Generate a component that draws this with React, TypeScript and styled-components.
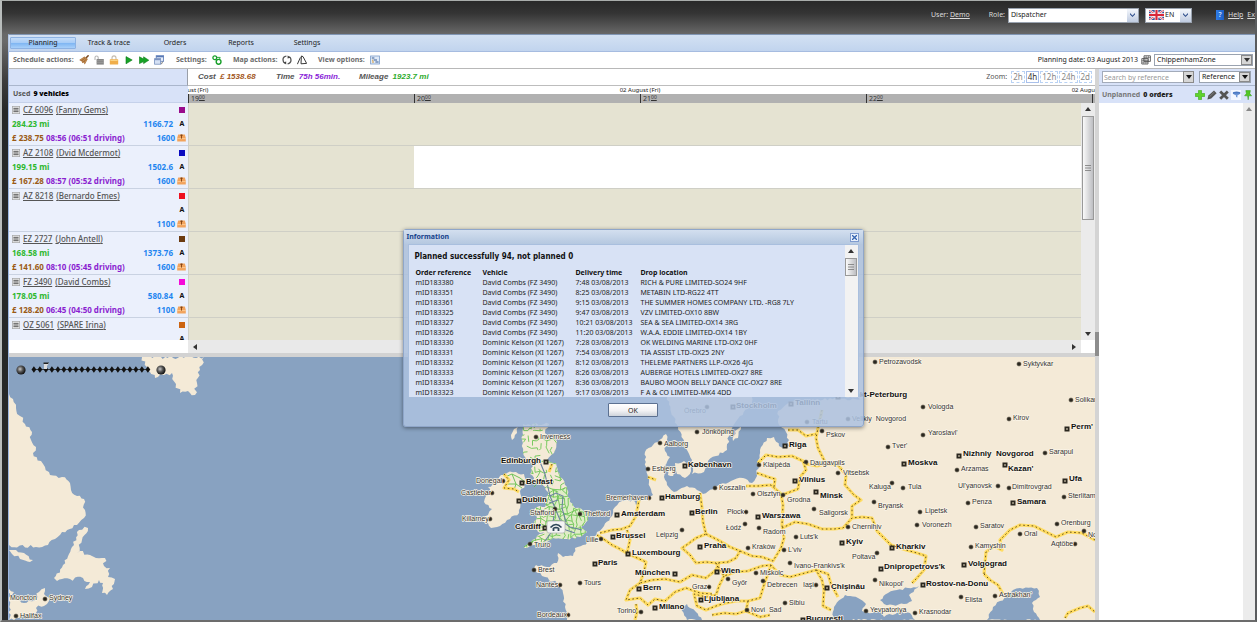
import React from "react";
import styled, { createGlobalStyle } from "styled-components";

const GlobalStyle = createGlobalStyle`
  * { box-sizing: border-box; }
  body { margin: 0; font: 7px/10px "Noto Sans", "DejaVu Sans", sans-serif; color: #222; background: #262828; }
  button, input, select { font: inherit; color: inherit; }
  a { color: inherit; }
`;

/* ---------- shell ---------- */

const Page = styled.div`
  display: flex;
  flex-direction: column;
  min-height: 100vh;
  overflow: hidden;
  position: relative;
  border: solid;
  border-width: 1px 2px 2px 2px;
  border-color: #a9adab #5a5c5e #6c6c6c #b9bdbc;
  background: linear-gradient(#292929 0, #343434 12px, #686868 33px, #6a6a6a 40px, #3c3c3c 80px, #262828 110px);
  padding-left: 6px;
`;

const Header = styled.header`
  display: flex;
  align-items: center;
  justify-content: flex-end;
  height: 33px;
  padding-bottom: 5px;
  color: #dcdcdc;
  white-space: nowrap;
  overflow: hidden;
`;

const UserInfo = styled.span`
  margin-right: 19px;
`;

const RoleField = styled.label`
  display: flex;
  align-items: center;
  gap: 3px;
  margin-right: 6px;
`;

const HelpLinks = styled.nav`
  display: flex;
  align-items: center;
  gap: 4px;
  width: 39px;
  margin-left: 24px;
  overflow: hidden;
`;

const HelpBadge = styled.span`
  width: 8px;
  height: 10px;
  background: linear-gradient(90deg, #2f7de8, #1d5dc4);
  color: #fff;
  text-align: center;
  flex: none;
`;

const SelectBox = styled.span<{ $w: number; $h: number }>`
  position: relative;
  display: inline-flex;
  width: ${(p) => p.$w}px;
  height: ${(p) => p.$h}px;
  background: #fff;
  border: 1px solid #9aa3b0;
  color: #222;
  flex: none;
`;

const NativeSelect = styled.select<{ $pad: number }>`
  appearance: none;
  width: 100%;
  height: 100%;
  padding: 0 12px 0 ${(p) => p.$pad}px;
  border: 0;
  background: transparent;
  outline: none;
`;

const Arrow = styled.span<{ $classic?: boolean }>`
  position: absolute;
  top: 0;
  right: 0;
  bottom: 0;
  width: 11px;
  display: flex;
  align-items: center;
  justify-content: center;
  pointer-events: none;
  background: ${(p) => (p.$classic ? "#d6d6d6" : "linear-gradient(#f4f7fc, #bfcbe0)")};
  border: ${(p) => (p.$classic ? "1px solid #8a8a8a" : "0")};
`;

const FlagSlot = styled.span`
  position: absolute;
  left: 3px;
  top: 1px;
  display: flex;
  pointer-events: none;
`;

const Tabs = styled.nav`
  display: flex;
  height: 18px;
  padding: 2px 1px 2px;
  background: linear-gradient(#d3e1f3, #c1d4ee);
  border-top: 1px solid #8196b4;
  border-bottom: 1px solid #a6bce0;
  border-left: 1px solid #b4c8e8;
`;

const Tab = styled.button<{ $active?: boolean }>`
  width: 66px;
  padding: 0;
  border: ${(p) => (p.$active ? "1px solid #8db2e3" : "1px solid transparent")};
  border-radius: 1px;
  background: ${(p) => (p.$active ? "linear-gradient(#c4dcf8 0%, #a9cdf7 45%, #7db4f2 50%, #a8d0fa 100%)" : "transparent")};
  color: #222;
  line-height: 10px;
`;

const ActionBar = styled.div`
  display: flex;
  align-items: center;
  height: 17px;
  padding: 0 0 0 4px;
  background: #fff;
  border-bottom: 1px solid #b8b8b8;
  border-left: 1px solid #9db8e2;
  white-space: nowrap;
`;

const ActionGroup = styled.div<{ $w: number }>`
  display: flex;
  align-items: center;
  gap: 5px;
  width: ${(p) => p.$w}px;
  flex: none;
`;

const GroupLabel = styled.span`
  font-weight: 700;
  color: #6b6b6b;
`;

const IconButton = styled.button`
  display: flex;
  width: 10px;
  height: 10px;
  padding: 0;
  border: 0;
  background: none;
  flex: none;
`;

const PlanningDate = styled.div`
  display: flex;
  align-items: center;
  gap: 3px;
  margin-left: auto;
  padding-right: 2px;
`;

const Workspace = styled.div`
  display: flex;
  flex: 1;
  min-height: 0;
  border-left: 1px solid #9db8e2;
`;

const MainPane = styled.main`
  display: flex;
  flex-direction: column;
  flex: 1;
  min-width: 0;
  background: #fff;
`;

const ColumnSplitter = styled.div`
  width: 4px;
  background: linear-gradient(#d4d4d4 263px, #8d8d8d 263px, #8d8d8d 287px, #d4d4d4 287px);
`;

/* ---------- schedule ---------- */

const SplitRow = styled.div<{ $h: number }>`
  display: grid;
  grid-template-columns: 179px minmax(0, 1fr);
  height: ${(p) => p.$h}px;
`;

const CornerCell = styled.div`
  background: #d8e2f8;
  border-right: 1px solid #9a9fa8;
  border-bottom: 1px solid #aab6cc;
`;

const Summary = styled.div`
  display: flex;
  align-items: center;
  padding-left: 10px;
  border-bottom: 1px solid #bdbdbd;
  font-family: "Liberation Sans", sans-serif;
  font-size: 8px;
  font-style: italic;
  font-weight: 700;
  color: #555;
  white-space: nowrap;
`;

const Metric = styled.span<{ $color: string; $w: number }>`
  width: ${(p) => p.$w}px;
  b { color: ${(p) => p.$color}; margin-left: 2px; }
`;

const ZoomGroup = styled.div`
  display: flex;
  align-items: center;
  gap: 1px;
  margin-left: auto;
  padding-right: 3px;
  font: 7px/10px "Noto Sans", sans-serif;
`;

const ZoomLabel = styled.span`
  margin-right: 3px;
`;

const ZoomButton = styled.button<{ $on?: boolean }>`
  height: 12px;
  padding: 0 1px;
  border: 1px ${(p) => (p.$on ? "solid #a9c0ea" : "dashed #b9d2f4")};
  background: #fff;
  font-family: "Noto Sans", sans-serif;
  font-size: 8px;
  line-height: 10px;
  color: ${(p) => (p.$on ? "#333" : "#888")};
`;

const FleetTitle = styled.h2`
  display: flex;
  align-items: center;
  gap: 3px;
  margin: 0;
  padding-left: 4px;
  background: #d8e2f8;
  border-bottom: 1px solid #c5d1ea;
  font-size: 7px;
  font-weight: 700;
  color: #555;
  b { color: #000; }
`;

const Axis = styled.div`
  overflow: hidden;
`;

const Days = styled.div`
  display: flex;
  height: 8px;
  margin-left: -226px;
`;

const Day = styled.span`
  flex: none;
  width: 452px;
  font-size: 6px;
  line-height: 8px;
  text-align: center;
`;

const Hours = styled.div`
  display: flex;
  height: 9px;
  background: #b1b1b1;
`;

const Hour = styled.span`
  flex: none;
  width: 226px;
  border-left: 1px solid #333;
  padding-left: 2px;
  line-height: 9px;
  color: #333;
  sup { font-size: 5px; line-height: 5px; vertical-align: 2px; text-decoration: underline; }
`;

const Fleet = styled.div`
  overflow: hidden;
  background: #ebf0fc;
`;

const Vehicle = styled.div`
  display: grid;
  grid-template-columns: minmax(0, 1fr) auto 10px;
  grid-auto-rows: 14px;
  align-items: center;
  height: 43px;
  padding: 0 1px 0 3px;
  border-bottom: 1px solid #c9d2e2;
  white-space: nowrap;
  font-size: 8px;
  font-weight: 700;
`;

const VehicleName = styled.div`
  grid-column: 1 / 3;
  display: flex;
  align-items: center;
  gap: 3px;
  font-weight: 500;
  color: #555;
`;

const Figure = styled.span<{ $color: string; $gap?: number }>`
  color: ${(p) => p.$color};
  text-align: ${(p) => (p.$gap ? "right" : "left")};
  padding-right: ${(p) => p.$gap || 0}px;
`;

const Swatch = styled.i<{ $color: string }>`
  justify-self: center;
  width: 6px;
  height: 6px;
  background: ${(p) => p.$color};
`;

const Mark = styled.span`
  justify-self: center;
  font-size: 7px;
  color: #111;
`;

const LaneArea = styled.div`
  display: grid;
  grid-template-columns: minmax(0, 1fr) 14px;
  overflow: hidden;
`;

const Lanes = styled.div`
  overflow: hidden;
  background: #e5e3d2;
  border-left: 1px solid #d0d0c8;
`;

const Lane = styled.div<{ $free?: boolean }>`
  height: 43px;
  padding-left: 225px;
  border-bottom: 1px solid #cfcfc6;
  &::after {
    content: "";
    display: block;
    height: 42px;
    background: ${(p) => (p.$free ? "#fff" : "transparent")};
  }
`;

const VScroll = styled.div<{ $faint?: boolean }>`
  display: flex;
  flex-direction: column;
  align-items: center;
  background: ${(p) => (p.$faint ? "#ececec" : "#ebebeb")};
  padding: 4px 0;
`;

const VThumb = styled.div<{ $h: number }>`
  display: flex;
  align-items: center;
  justify-content: center;
  width: 12px;
  height: ${(p) => p.$h}px;
  margin: 5px 0 auto;
  border: 1px solid #999;
  background: linear-gradient(90deg, #fafafa, #bdbec2);
`;

const HScroll = styled.div`
  display: flex;
  align-items: center;
  justify-content: space-between;
  margin-right: 14px;
  padding: 0 5px;
  background: #e9e9e9;
`;

const RowSplitter = styled.div`
  height: 4px;
  background: #d2d2d2;
`;

/* ---------- unplanned orders ---------- */

const OrdersPane = styled.aside`
  display: flex;
  flex-direction: column;
  width: 156px;
  background: #fff;
`;

const SearchRow = styled.div`
  display: flex;
  align-items: center;
  gap: 5px;
  height: 17px;
  padding-left: 3px;
  background: #d8e2f8;
  border-bottom: 1px solid #aab6cc;
`;

const SearchBox = styled.div`
  position: relative;
  width: 92px;
  height: 12px;
`;

const SearchInput = styled.input`
  display: block;
  width: 100%;
  height: 100%;
  padding: 0 12px 0 1px;
  border: 1px solid #a3abba;
  background: #fff;
  outline: none;
  &::placeholder { color: #999; opacity: 1; }
`;

const OrdersTitle = styled.h2`
  display: flex;
  align-items: center;
  gap: 2px;
  height: 17px;
  margin: 0;
  padding: 0 2px 0 3px;
  background: #d8e2f8;
  font-size: 7px;
  font-weight: 700;
  color: #777;
  white-space: nowrap;
  b { color: #222; margin: 0 auto 0 1px; }
`;

const OrdersBody = styled.div`
  display: flex;
  flex: 1;
  justify-content: flex-end;
`;

const OrdersScroll = styled(VScroll)`
  width: 12px;
`;

/* ---------- map ---------- */

const MapArea = styled.section`
  position: relative;
  flex: 1;
  min-height: 263px;
  background: #88a2c1;
  overflow: hidden;
`;

const MapSvg = styled.svg`
  position: absolute;
  inset: 0;
  width: 100%;
  height: 100%;
  font-family: "Liberation Sans", Arial, sans-serif;
`;

/* ---------- dialog ---------- */

const Dialog = styled.section`
  position: absolute;
  left: calc(50% - 226px);
  top: 228px;
  width: 461px;
  display: flex;
  flex-direction: column;
  border: 1px solid #8fa6c9;
  border-radius: 3px;
  background: rgba(172, 193, 224, 0.86);
  box-shadow: 0 1px 4px rgba(0, 0, 0, 0.45);
  padding: 0 4px;
`;

const DialogTitle = styled.header`
  display: flex;
  align-items: center;
  justify-content: space-between;
  height: 14px;
  margin: 0 -4px;
  padding: 0 4px 0 3px;
  background: linear-gradient(#d3dfef, #b5c8e0);
  h2 { margin: 0; font-size: 7px; color: #15428b; }
`;

const CloseButton = styled.button`
  display: flex;
  align-items: center;
  justify-content: center;
  width: 9px;
  height: 9px;
  padding: 0;
  border: 1px solid #7f9ccf;
  background: #e8f0fb;
`;

const DialogBody = styled.div`
  display: flex;
  height: 153px;
  overflow: hidden;
  background: #d8e2f5;
  border: 1px solid #a9bfde;
  border-bottom: 0;
`;

const Report = styled.div`
  flex: 1;
  padding: 6px 0 0 6px;
  h3 { margin: 0 0 5px; font: 700 8px/12px "DejaVu Sans Condensed", "Noto Sans", sans-serif; color: #111; }
`;

const OrdersTable = styled.table`
  border-collapse: collapse;
  table-layout: fixed;
  width: 400px;
  white-space: nowrap;
  th, td { padding: 0 0 0 1px; height: 10px; line-height: 10px; text-align: left; }
  th { color: #111; }
`;

const Col = styled.col<{ $w?: number }>`
  width: ${(p) => (p.$w ? `${p.$w}px` : "auto")};
`;

const DialogScroll = styled(VScroll)`
  width: 13px;
  background: #f2f2f2;
`;

const DialogFooter = styled.footer`
  display: flex;
  justify-content: center;
  padding: 6px 0 9px;
`;

const OkButton = styled.button`
  width: 50px;
  height: 14px;
  padding: 0;
  border: 1px solid #5c7191;
  border-radius: 1px;
  background: linear-gradient(#fff, #f2f2f4 55%, #cfd4dc);
  line-height: 11px;
`;

/* ---------- icons ---------- */

const Svg10 = ({ children }: { children: React.ReactNode }) => (
  <svg width="10" height="10" viewBox="0 0 10 10" fill="none">{children}</svg>
);

const Down = ({ c = "#333" }: { c?: string }) => (
  <svg width="6" height="4" viewBox="0 0 6 4"><path d="M0 0H6L3 4Z" fill={c} /></svg>
);
const Up = ({ c = "#333" }: { c?: string }) => (
  <svg width="6" height="4" viewBox="0 0 6 4"><path d="M0 4H6L3 0Z" fill={c} /></svg>
);
const Chevron = () => (
  <svg width="5" height="4" viewBox="0 0 5 4"><path d="M0 0L2.5 2.5L5 0V1.6L2.5 4L0 1.6Z" fill="#2f4f8c" /></svg>
);
const Grip = () => (
  <svg width="6" height="6" viewBox="0 0 6 6"><path d="M0 .5H6M0 3H6M0 5.5H6" stroke="#777" strokeWidth=".8" /></svg>
);

const Broom = () => (
  <Svg10>
    <path d="M9.6 .3L7 3" stroke="#7a4a22" strokeWidth="1.5" />
    <path d="M5.4 1.4L8.8 4L5.8 9.6L4.6 7.6L3.4 8.2L2.8 6.4L.2 5Z" fill="#a9713a" />
    <path d="M1.6 4.8L5.6 2.6M3.4 6.4L7 3.4M5.4 8L8 4.4" stroke="#d8a466" strokeWidth=".6" />
  </Svg10>
);
const Unlock = () => (
  <Svg10>
    <path d="M1 5V2.6Q1 1 2.6 1Q4.2 1 4.2 2.6V4" stroke="#b5b5b5" strokeWidth="1.1" />
    <rect x="2.6" y="4" width="7.2" height="5.6" fill="#868686" />
    <path d="M2.6 5.7H9.8M2.6 7.6H9.8" stroke="#aaa" strokeWidth=".5" />
  </Svg10>
);
const Lock = () => (
  <Svg10>
    <path d="M3 5V3Q3 .9 5 .9Q7 .9 7 3V5" stroke="#c4bcae" strokeWidth="1.1" />
    <rect x=".8" y="4.2" width="8.4" height="5.4" rx=".6" fill="#f0ae4a" />
    <path d="M1.4 5.4H8.6" stroke="#fbd88c" />
  </Svg10>
);
const Play = () => <Svg10><path d="M2 1.6L8.2 5L2 8.8Z" fill="#17a326" stroke="#0b7a18" strokeWidth=".6" /></Svg10>;
const FastForward = () => (
  <Svg10><path d="M.4 1.8L4.6 4V1.8L9.8 5.2L4.6 8.6V6.6L.4 8.6Z" fill="#17a326" stroke="#0b7a18" strokeWidth=".6" /></Svg10>
);
const Windows = () => (
  <Svg10>
    <rect x="2.2" y=".7" width="7.4" height="5.6" fill="#e6eefb" stroke="#5979b5" strokeWidth=".8" />
    <path d="M2.2 1.6H9.6" stroke="#5979b5" strokeWidth="1.4" />
    <rect x=".6" y="3.6" width="6" height="5.6" fill="#d6e1f4" stroke="#7790bd" strokeWidth=".8" />
    <path d="M.8 4.6H6.4" stroke="#7b93c0" strokeWidth="1.2" /><path d="M7.4 9.2L8.6 6.6" stroke="#777" />
  </Svg10>
);
const Gears = () => (
  <Svg10>
    <circle cx="2.8" cy="2.8" r="1.9" stroke="#19a02b" strokeWidth="1.3" />
    <circle cx="6.6" cy="6.8" r="2.4" stroke="#19a02b" strokeWidth="1.4" />
    <path d="M5 2.4H8.2L7.4 4.4" stroke="#19a02b" strokeWidth=".9" />
  </Svg10>
);
const Refresh = () => (
  <Svg10>
    <path d="M4.4 1.2Q1 1.6 1 4.8Q1 7 2.8 8.2M5.6 8.8Q9 8.2 9 5Q9 3 7.4 1.8" stroke="#555" strokeWidth="1.3" />
    <path d="M1.2 7.4L4.2 9.6V6.4ZM8.8 2.6L5.6 .4V3.6Z" fill="#444" />
  </Svg10>
);
const Route = () => (
  <Svg10><path d="M.4 9.2L3.4 2.4M4.4 1L4 8.8L9.6 8.4L6 1.6L4.4 1" stroke="#222" strokeWidth=".9" /></Svg10>
);
const ViewList = () => (
  <Svg10>
    <rect x=".6" y="1" width="8.8" height="8" fill="#dfeaf8" stroke="#7a9cc8" strokeWidth=".8" />
    <path d="M1.8 3H4.4M3.6 5H7M5.4 7H8.6" stroke="#3b5d94" strokeWidth="1.1" /><path d="M2 5.2H3.2M2 7H4" stroke="#d69a3a" />
  </Svg10>
);
const Calendar = () => (
  <Svg10>
    <path d="M3 .8H9.4V6.4H3ZM.8 3.6H7V9H.8Z" fill="#fff" stroke="#444" strokeWidth=".8" />
    <path d="M2.8 3.6V9M4.9 3.6V9M.8 5.4H7M.8 7.2H7M5.2 .8V3.6M7.4 .8V6.4M3 2.6H9.4" stroke="#444" strokeWidth=".5" />
  </Svg10>
);
const ListIcon = () => (
  <svg width="8" height="8" viewBox="0 0 8 8"><rect x=".4" y=".4" width="7.2" height="7.2" fill="#f3f3f3" stroke="#aaa" strokeWidth=".8" /><path d="M1.4 2.3H6.6M1.4 4H6.6M1.4 5.7H6.6" stroke="#444" strokeWidth=".9" /></svg>
);
const Parcel = () => (
  <svg width="9" height="8" viewBox="0 0 9 8"><path d="M1.2 .4H7.8L8.8 4V7.6H.2V4Z" fill="#f2a35c" /><path d="M.2 4.6H8.8" stroke="#ffd3a0" strokeWidth=".8" /><path d="M4.5 .6V4.6M3.2 1.2H5.8" stroke="#7d3d0e" strokeWidth=".9" fill="none" /></svg>
);
const Plus = () => <Svg10><path d="M3.5 .4H6.5V3.5H9.7V6.5H6.5V9.6H3.5V6.5H.3V3.5H3.5Z" fill="#5fd32b" stroke="#37a913" strokeWidth=".6" /></Svg10>;
const Pencil = () => <Svg10><path d="M.4 9.6L1.4 5.6L7 .6L9.6 3.2L4.2 8.6Z" fill="#555" /><path d="M2.4 6.8L7.4 2" stroke="#999" strokeWidth=".6" /></Svg10>;
const Cross = () => <Svg10><path d="M1.2 1.4L8.8 8.8M8.8 1.4L1.2 8.8" stroke="#555" strokeWidth="2.8" /></Svg10>;
const Filter = () => <Svg10><rect x="0" y="0" width="10" height="10" fill="#f3f7ff" /><ellipse cx="5.6" cy="3" rx="3.8" ry="1.5" fill="#4a78c2" /><path d="M2.4 3.6H8.8L6.4 5.6V7.6L5 7V5.6Z" fill="#6d96d6" /></Svg10>;
const Pin = () => <Svg10><path d="M2.8 .6H7.4L6.8 3.6L8.6 5.8H5.6L5.2 9.8L4.6 5.8H1.6L3.4 3.6Z" fill="#52c824" stroke="#2f9c10" strokeWidth=".5" /></Svg10>;
const Flag = () => (
  <svg width="15" height="10" viewBox="0 0 15 10">
    <rect width="15" height="10" fill="#3c4f93" />
    <path d="M0 0L15 10M15 0L0 10" stroke="#fff" strokeWidth="2.2" /><path d="M0 0L15 10M15 0L0 10" stroke="#d8283a" strokeWidth=".8" />
    <path d="M7.5 0V10M0 5H15" stroke="#fff" strokeWidth="3.6" /><path d="M7.5 0V10M0 5H15" stroke="#d8283a" strokeWidth="2.2" />
  </svg>
);

/* ---------- map data ---------- */

type Pt = [number, number];

const noise = (n: number) => {
  const v = Math.sin(n * 127.1 + 11.7) * 43758.5453;
  return v - Math.floor(v) - 0.5;
};

/* Breaks every edge of a coast into short, slightly displaced pieces. */
const coast = (src: string, amp = 2) => {
  const pts = src.split(" ").map((p) => p.split(",").map(Number) as Pt);
  const out: string[] = [];
  pts.forEach(([x, y], i) => {
    const [nx, ny] = pts[(i + 1) % pts.length];
    const len = Math.hypot(nx - x, ny - y);
    out.push(`${x} ${y}`);
    const n = len > 90 ? 0 : Math.floor(len / 2.5);
    for (let k = 1; k < n; k++) {
      const t = k / n;
      const d = noise(x * 3 + y + k * 7.3) * amp;
      out.push(`${(x + (nx - x) * t + ((ny - y) / len) * d).toFixed(1)} ${(y + (ny - y) * t - ((nx - x) / len) * d).toFixed(1)}`);
    }
  });
  return `M${out.join("L")}Z`;
};

const BRITAIN =
  "523,424 549,424 545,433 548,436 557,441 554,453 547,460 556,463 560,477 567,487 568,497 575,508 587,511 588,520 581,527 587,532 580,537 567,539 553,538 547,542 535,545 524,548 531,542 537,536 548,531 540,533 532,526 537,517 532,513 537,507 545,507 545,502 548,495 545,487 536,483 530,474 533,466 527,460 523,452 522,440";

const LAND = [
  "9,394 13,399 16,408 20,416 25,424 32,432 31,440 36,447 33,453 41,461 45,467 50,475 62,477 70,483 71,490 77,496 84,499 85,510 84,518 77,525 62,532 55,539 48,545 36,547 9,545",
  "142,357 147,367 155,378 164,375 172,373 176,384 180,393 188,391 195,395 197,383 200,370 204,357",
  "88,528 79,530 72,547 63,565 54,578 57,581 70,579 83,578 90,582 85,589 92,587 99,580 103,583 102,593 107,595 113,589 115,579 108,577 110,568 104,566 105,558 96,558 90,555 80,551 77,553 82,540",
  "9,550 16,550 24,553 33,560 30,562 20,559 12,554",
  "9,589 14,592 13,599 24,603 34,601 39,592 45,588 44,594 49,601 44,606 36,608 36,613 24,616 14,620 9,620",
  BRITAIN,
  "507,473 516,472 524,474 527,483 520,491 522,500 519,513 510,519 500,526 491,528 488,523 482,521 488,515 492,509 484,502 486,496 492,494 488,487 498,483 501,475",
  "514,429 518,426 517,433 512,440 511,435",
  "535,570 536,565 547,567 557,563 558,553 563,557 573,556 575,548 583,545 593,540 597,532 604,526 610,518 615,507 622,501 633,500 636,505 641,500 648,500 653,495 650,487 648,477 646,467 645,452 653,445 666,434 667,440 665,451 670,457 664,466 664,477 667,485 674,492 687,486 697,490 703,494 715,487 731,481 743,478 752,483 757,476 758,463 760,450 767,438 774,437 779,446 787,448 789,440 786,432 779,425 778,411 787,404 800,400 840,399 865,400 845,394 800,392 770,396 750,357 1095,357 1095,620 567,620 565,607 563,593 557,583 545,577",
  "678,427 671,412 667,397 700,392 752,394 752,405 740,416 733,426 729,436 727,450 716,456 708,461 704,472 692,474 692,460 685,447",
  "675,463 684,461 692,464 691,471 685,478 677,474",
  "667,470 673,471 673,476 668,475",
  "735,431 741,426 738,438 733,441",
  "722,440 724,436 720,455",
];

const WATER = [
  "833,620 834,607 841,599 845,595 858,598 866,604 862,611 872,613 880,611 884,617 898,612 910,613 915,620",
  "880,600 888,593 897,590 908,588 919,586 909,595 912,601 904,604 893,605 884,604",
  "987,620 993,607 1000,601 1007,597 1013,590 1020,588 1037,588 1040,597 1032,603 1034,612 1040,620",
  "681,608 687,604 690,608 696,612 702,620 687,620",
];

const BORDERS = [
  "597,535 605,540 612,545 620,549 627,553",
  "600,533 612,530 622,529 630,526 636,516 639,500",
  "627,530 630,540 627,553 635,557 646,562 644,572 640,583 652,580 665,579 680,582 692,575 706,578 716,570 719,563",
  "640,583 630,590 626,600 640,598 648,605 655,599 665,601 675,592 686,588 700,593 712,594",
  "636,604 637,612 635,620", "648,477 656,480",
  "700,493 702,508 703,522 706,534 696,538 688,544 682,548 690,555 696,563 706,562 716,563",
  "706,534 718,540 730,547 740,551 736,558 728,562 716,563",
  "740,551 752,556 762,557 773,561 781,548 784,538 782,525 783,505 781,494 771,485 758,486 746,486",
  "758,463 766,455 778,457 792,456 803,461 806,470 800,477 798,489 790,492 782,495",
  "757,473 768,477 775,479 774,487", "806,464 817,466 826,464 818,448 816,438 818,428 822,410",
  "788,430 798,430 806,436 816,434", "826,464 838,465 846,475 845,485 854,495 861,500 852,506 852,518",
  "782,528 795,522 808,524 822,529 834,529 843,528 852,518 862,517 872,518 877,531 884,538 891,545 906,550 917,553 926,556 924,570 916,579 912,583",
  "716,563 724,576 735,572 748,571 762,566 771,565 780,575 790,577 805,573 816,570 822,580 824,590 823,606 831,610",
  "816,570 828,574 831,584 838,597", "771,565 764,585 760,598 748,601 736,601",
  "724,576 719,586 716,595 706,597 694,594 697,606 706,610 716,606 722,604 736,601",
  "748,601 746,611 760,617 770,615", "712,615 724,613 736,614 746,611",
  "504,474 509,480 504,488 514,489 519,492", "552,464 549,472",
  "984,574 986,552 994,546 1002,550 1000,540 1010,530 1020,525 1034,526 1046,532 1056,537 1068,532 1082,533 1095,540",
  "984,574 990,580 998,585 1003,594", "1065,618 1068,613 1080,608 1088,606 1095,612",
];

/* name, marker x/y, label x, baseline y, weight */
type Place = [string, number, number, number, number, ("city" | "mid")?];
const PLACES: Place[] = [
  ["Moncton", -20, 0, 10, 598], ["Sydney", 45, 599, 49, 598, "mid"], ["Halifax", 16, 616, 20, 616],
  ["Inverness", 536, 437, 540, 437], ["Edinburgh", 546, 462, 501, 461, "city"], ["Donegal", 503, 481, 476, 481],
  ["Belfast", 522, 483, 526, 482, "city"], ["Castlebar", 492, 493, 461, 493], ["Dublin", 519, 501, 522, 500, "city"],
  ["Stafford", 555, 509, 530, 513], ["Thetford", 580, 514, 584, 514], ["Killarney", 490, 519, 462, 519],
  ["Cardiff", 545, 528, 515, 527, "city"], ["Truro", 530, 544, 534, 545], ["Lille", 601, 539, 586, 540],
  ["Brest", 534, 570, 538, 570], ["Nantes", 560, 585, 536, 585], ["Tours", 580, 583, 584, 583],
  ["Bordeaux", 568, 615, 537, 615], ["Paris", 595, 564, 598, 563, "city"], ["Brussel", 613, 537, 616, 536, "city"],
  ["Luxembourg", 628, 554, 632, 553, "city"], ["Amsterdam", 617, 515, 621, 514, "city"], ["Bremerhaven", 649, 498, 606, 498],
  ["Hamburg", 662, 498, 665, 497, "city"], ["Esbjerg", 648, 469, 652, 469], ["Aalborg", 660, 443, 664, 444],
  ["Jönköping", 697, 432, 702, 432], ["København", 685, 466, 688, 465, "city"], ["Örebro", 707, 407, 684, 411],
  ["Stockholm", 733, 407, 736, 406, "city"], ["Tallinn", 791, 404, 795, 403, "city"], ["Tartu", 807, 422, 812, 422],
  ["Leipzig", 682, 530, 656, 535, "mid"], ["Berlin", 692, 513, 695, 512, "city"], ["München", 675, 574, 635, 573, "city"],
  ["Bern", 639, 589, 643, 588, "city"], ["Milano", 655, 608, 659, 607, "city"], ["Torino", 641, 612, 617, 611, "mid"],
  ["Graz", 709, 587, 692, 587, "mid"], ["Praha", 700, 547, 704, 546, "city"], ["Wien", 717, 572, 721, 571, "city"],
  ["Győr", 728, 579, 732, 583], ["Ljubljana", 701, 600, 704, 599, "city"], ["Koszalin", 715, 488, 719, 488],
  ["Olsztyn", 753, 494, 757, 494], ["Płock", 746, 512, 727, 512], ["Warszawa", 758, 517, 762, 516, "city"],
  ["Łódź", 745, 524, 726, 528, "mid"], ["Radom", 759, 528, 763, 532], ["Kraków", 748, 548, 752, 547],
  ["Miskolc", 756, 573, 760, 573], ["Debrecen", 763, 581, 767, 585], ["Novi  Sad", 747, 610, 751, 610],
  ["Sibiu", 785, 603, 789, 603], ["Iaşi", 816, 585, 803, 585], ["Chişinău", 827, 588, 831, 587, "city"],
  ["Bucureşti", 803, 620, 806, 619, "city"], ["Ivano-Frankivs'k", 790, 563, 794, 566], ["L'viv", 784, 550, 788, 550],
  ["Luts'k", 796, 537, 800, 537], ["Kyiv", 842, 543, 846, 542, "city"], ["Chernihiv", 848, 527, 852, 527],
  ["Riga", 785, 446, 789, 445, "city"], ["Klaipėda", 759, 465, 763, 465], ["Daugavpils", 806, 462, 810, 463],
  ["Vilnius", 795, 481, 799, 480, "city"], ["Vitsebsk", 838, 473, 843, 473], ["Grodna", 783, 495, 787, 500],
  ["Minsk", 816, 492, 820, 496, "city"], ["Saligorsk", 814, 509, 819, 513], ["Pskov", 822, 431, 826, 435],
  ["Sankt-Peterburg", 838, 397, 845, 395, "city"], ["Velikiy  Novgorod", 848, 419, 852, 419], ["Tver'", 888, 447, 892, 446],
  ["Moskva", 904, 464, 908, 463, "city"], ["Kaluga", 892, 483, 869, 487], ["Tula", 903, 488, 908, 487, "mid"],
  ["Bryansk", 874, 502, 878, 506], ["Lipetsk", 920, 512, 925, 511, "mid"], ["Voronezh", 917, 525, 922, 525, "mid"],
  ["Kharkiv", 892, 548, 896, 547, "city"], ["Poltava", 877, 553, 852, 557], ["Dnipropetrovs'k", 881, 569, 884, 567, "city"],
  ["Nikopol'", 875, 580, 879, 584], ["Rostov-na-Donu", 923, 585, 926, 584, "city"], ["Yevpatoriya", 866, 611, 870, 610],
  ["Krasnodar", 915, 613, 919, 612, "mid"], ["Volgograd", 964, 565, 968, 564, "city"], ["Kamyshin", 971, 547, 975, 546],
  ["Saratov", 976, 527, 980, 526, "mid"], ["Elista", 961, 597, 965, 600], ["Astrakhan'", 995, 596, 999, 595],
  ["Penza", 968, 503, 972, 502, "mid"], ["Samara", 1013, 503, 1017, 502, "city"], ["Ul'yanovsk", 998, 486, 958, 486, "mid"],
  ["Dimitrovgrad", 1009, 488, 1012, 487], ["Arzamas", 957, 470, 961, 469], ["Nizhniy  Novgorod", 959, 456, 963, 454, "city"],
  ["Kazan'", 1005, 465, 1008, 469, "city"], ["Sarapul", 1045, 453, 1049, 452], ["Perm'", 1067, 429, 1071, 427, "city"],
  ["Ufa", 1065, 481, 1069, 479, "city"], ["Sterlitamak", 1064, 497, 1068, 496], ["Orenburg", 1057, 524, 1061, 523, "mid"],
  ["Oral", 1020, 534, 1024, 534], ["Aqtöbe", 1075, 544, 1051, 544], ["Novotroitsk", 1084, 531, 1088, 535],
  ["Kirov", 1009, 419, 1013, 418, "mid"], ["Solikamsk", 1071, 400, 1075, 400], ["Syktyvkar", 1019, 364, 1023, 364],
  ["Petrozavodsk", 875, 362, 879, 362], ["Vologda", 923, 407, 928, 407], ["Yaroslavl'", 923, 435, 928, 433, "mid"],
];

/* A jittered mesh that stands for the British road network, thinner in Scotland and Wales. */
const roadMesh = () => {
  const at = (i: number, j: number): Pt => [520 + i * 4 + noise(i * 9 + j * 31) * 4, 424 + j * 4 + noise(i * 17 + j * 5 + 3) * 4];
  let d = "";
  for (let i = 0; i < 18; i++)
    for (let j = 0; j < 32; j++) {
      const sparse = j < 16 ? -0.1 : 0.25;
      const [x, y] = at(i, j);
      const [a, b] = at(i + 1, j);
      const [c, e] = at(i, j + 1);
      if (noise(i * 3.7 + j * 1.9) < sparse) d += `M${a.toFixed(1)} ${b.toFixed(1)}L${x.toFixed(1)} ${y.toFixed(1)}`;
      if (noise(i * 5.3 + j * 2.3 + 9) < sparse) d += `M${c.toFixed(1)} ${e.toFixed(1)}L${x.toFixed(1)} ${y.toFixed(1)}`;
    }
  return d;
};

const Europe = () => (
  <MapSvg viewBox="9 357 1086 263" preserveAspectRatio="xMinYMin slice" role="img" aria-label="Map of vehicle routes">
    <defs>
      <clipPath id="britain"><path d={coast(BRITAIN, 2)} /></clipPath>
      <radialGradient id="knob" cx="40%" cy="40%" r="60%"><stop offset="0" stopColor="#c9c9c9" /><stop offset=".5" stopColor="#555" /><stop offset="1" stopColor="#111" /></radialGradient>
    </defs>
    <g fill="#f4ead7">{LAND.map((l, i) => <path key={i} d={coast(l, i < 5 ? 4 : 2.5)} />)}</g>
    <g fill="#88a2c1">{WATER.map((l, i) => <path key={i} d={coast(l)} />)}</g>
    <g clipPath="url(#britain)">
      <path d="M550 489L567 489L588 512L588 536L545 540L548 508Z" fill="#d2ecbc" opacity=".6" />
      <path d={roadMesh()} fill="none" stroke="#6cc653" strokeWidth=".9" />
      <path d="M540 462L545 474L550 496L555 508L560 520L570 527L582 530M550 496L556 493L563 496L562 508L566 522M549 503L558 500M555 510L553 522L566 530L575 533M545 541L553 530" fill="none" stroke="#6b83a0" strokeWidth="1.1" />
    </g>
    <path d="M505 477L512 474L520 478L525 482M506 484L516 484L522 488M512 474L516 484L514 490M524 547L535 540M534 487L537 484" fill="none" stroke="#62c04c" strokeWidth=".9" />
    <g fill="none" strokeLinejoin="round">
      {BORDERS.map((b, i) => <polyline key={`y${i}`} points={b} stroke="#ffdc62" strokeWidth="3.2" />)}
      {BORDERS.map((b, i) => <polyline key={`k${i}`} points={b} stroke="#6b5518" strokeWidth="1" strokeDasharray="1.6 2.6" />)}
    </g>
    {PLACES.map(([name, mx, my, lx, ly, kind]) => (
      <g key={name}>
        {kind === "city"
          ? <><rect x={mx - 2.5} y={my - 2.5} width="5" height="5" fill="#2a271f" /><rect x={mx - 1} y={my - 1} width="2" height="2" fill="#8a8372" /></>
          : <circle cx={mx} cy={my} r="2.1" fill="#2a271f" stroke="#6a6455" strokeWidth=".5" />}
        <text x={lx} y={ly + 2} fontSize={kind === "city" ? 8 : 7} fontWeight={kind === "city" ? 700 : 400}
          fill={kind === "city" ? "#111" : "#333"} stroke="#fbf5e8" strokeWidth="1.4" strokeLinejoin="round" paintOrder="stroke" xmlSpace="preserve">{name}</text>
      </g>
    ))}
    <rect x="547" y="521" width="18" height="12" rx="2" fill="#f4f4f4" stroke="#b5b5b5" strokeWidth=".8" />
    <path d="M550.5 527.5Q556 521.5 561.5 527.5" fill="none" stroke="#2f4658" strokeWidth="1.6" />
    <path d="M552.6 531V528Q556 525.4 559.4 528V531H557.6V528.6H554.4V531Z" fill="#2f4658" />
    <circle cx="21" cy="370" r="4.6" fill="url(#knob)" /><circle cx="161" cy="370" r="4.6" fill="url(#knob)" />
    <path d="M33 369.5H150" stroke="#222" strokeWidth=".8" />
    {Array.from({ length: 20 }, (_, i) => (
      <path key={i} d={`M${31.5 + i * 6} 369.5l2.4 -3.2l2.4 3.2l-2.4 3.2z`} fill="#111" />
    ))}
    <path d="M44 363H49L47 366L47 369H44Z" fill="#ddd" /><path d="M43.5 362.5H49L48 364H43.5Z" fill="#222" />
  </MapSvg>
);

/* ---------- content ---------- */

const VEHICLES = [
  { plate: "CZ 6096", driver: "Fanny Gems", color: "#990a8c", miles: "284.23 mi", load: "1166.72", cost: "£ 238.75", time: "08:56 (06:51 driving)", cap: "1600" },
  { plate: "AZ 2108", driver: "Dvid Mcdermot", color: "#0a0ac0", miles: "199.15 mi", load: "1502.6", cost: "£ 167.28", time: "08:57 (05:52 driving)", cap: "1600" },
  { plate: "AZ 8218", driver: "Bernardo Emes", color: "#ee1020", miles: "", load: "", cost: "", time: "", cap: "1100" },
  { plate: "EZ 2727", driver: "John Antell", color: "#6b3a10", miles: "168.58 mi", load: "1373.76", cost: "£ 141.60", time: "08:10 (05:45 driving)", cap: "1600" },
  { plate: "FZ 3490", driver: "David Combs", color: "#f50ad8", miles: "178.05 mi", load: "580.84", cost: "£ 128.20", time: "06:45 (04:50 driving)", cap: "1100" },
  { plate: "OZ 5061", driver: "SPARE Irina", color: "#cc6412", miles: "", load: "", cost: "", time: "", cap: "" },
];

const DC = "David Combs (FZ 3490)";
const DK = "Dominic Kelson (XI 1267)";
const ORDERS = [
  ["mID183380", DC, "7:48 03/08/2013", "RICH & PURE LIMITED-SO24 9HF"],
  ["mID183351", DC, "8:25 03/08/2013", "METABIN LTD-RG22 4TT"],
  ["mID183361", DC, "9:15 03/08/2013", "THE SUMMER HOMES COMPANY LTD. -RG8 7LY"],
  ["mID183325", DC, "9:47 03/08/2013", "VZV LIMITED-OX10 8BW"],
  ["mID183327", DC, "10:21 03/08/2013", "SEA & SEA LIMITED-OX14 3RG"],
  ["mID183326", DC, "11:20 03/08/2013", "W.A.A. EDDIE LIMITED-OX14 1BY"],
  ["mID183330", DK, "7:28 03/08/2013", "OK WELDING MARINE LTD-OX2 0HF"],
  ["mID183331", DK, "7:54 03/08/2013", "TIA ASSIST LTD-OX25 2NY"],
  ["mID183332", DK, "8:12 03/08/2013", "THELEME PARTNERS LLP-OX26 4JG"],
  ["mID183333", DK, "8:26 03/08/2013", "AUBERGE HOTELS LIMITED-OX27 8RE"],
  ["mID183334", DK, "8:36 03/08/2013", "BAUBO MOON BELLY DANCE CIC-OX27 8RE"],
  ["mID183323", DK, "9:17 03/08/2013", "F A & CO LIMITED-MK4 4DD"],
];

const Tool = ({ label, children }: { label: string; children: React.ReactNode }) => (
  <IconButton type="button" aria-label={label}>{children}</IconButton>
);

export default function App() {
  return (
    <Page>
      <GlobalStyle />
      <Header>
        <UserInfo>User: <a href="#user">Demo</a></UserInfo>
        <RoleField>
          Role:
          <SelectBox $w={131} $h={15}>
            <NativeSelect $pad={2}><option>Dispatcher</option></NativeSelect>
            <Arrow><Chevron /></Arrow>
          </SelectBox>
        </RoleField>
        <SelectBox $w={47} $h={15}>
          <FlagSlot><Flag /></FlagSlot>
          <NativeSelect $pad={19} aria-label="Language"><option>EN</option></NativeSelect>
          <Arrow><Chevron /></Arrow>
        </SelectBox>
        <HelpLinks>
          <HelpBadge>?</HelpBadge>
          <a href="#help">Help</a>
          <a href="#exit">Exit</a>
        </HelpLinks>
      </Header>

      <Tabs>
        {["Planning", "Track & trace", "Orders", "Reports", "Settings"].map((t, i) => (
          <Tab key={t} type="button" $active={i === 0}>{t}</Tab>
        ))}
      </Tabs>

      <ActionBar>
        <ActionGroup $w={163}>
          <GroupLabel>Schedule actions:</GroupLabel>
          <Tool label="Clear schedule"><Broom /></Tool>
          <Tool label="Unlock"><Unlock /></Tool>
          <Tool label="Lock"><Lock /></Tool>
          <Tool label="Plan"><Play /></Tool>
          <Tool label="Plan all"><FastForward /></Tool>
          <Tool label="Copy schedule"><Windows /></Tool>
        </ActionGroup>
        <ActionGroup $w={57}>
          <GroupLabel>Settings:</GroupLabel>
          <Tool label="Planning settings"><Gears /></Tool>
        </ActionGroup>
        <ActionGroup $w={85}>
          <GroupLabel>Map actions:</GroupLabel>
          <Tool label="Refresh map"><Refresh /></Tool>
          <Tool label="Show routes"><Route /></Tool>
        </ActionGroup>
        <ActionGroup $w={70}>
          <GroupLabel>View options:</GroupLabel>
          <Tool label="Change view"><ViewList /></Tool>
        </ActionGroup>
        <PlanningDate>
          Planning date: 03 August 2013
          <Tool label="Pick date"><Calendar /></Tool>
          <SelectBox $w={99} $h={12}>
            <NativeSelect $pad={2} aria-label="Zone"><option>ChippenhamZone</option></NativeSelect>
            <Arrow $classic><Down /></Arrow>
          </SelectBox>
        </PlanningDate>
      </ActionBar>

      <Workspace>
        <MainPane>
          <SplitRow $h={17}>
            <CornerCell />
            <Summary>
              <Metric $color="#a2561a" $w={78}>Cost <b>£ 1538.68</b></Metric>
              <Metric $color="#8a1fd8" $w={83}>Time <b>75h 56min.</b></Metric>
              <Metric $color="#2eab2e" $w={90}>Mileage <b>1923.7 mi</b></Metric>
              <ZoomGroup>
                <ZoomLabel>Zoom:</ZoomLabel>
                {["2h", "4h", "12h", "24h", "2d"].map((z) => (
                  <ZoomButton key={z} type="button" $on={z === "4h"}>{z}</ZoomButton>
                ))}
              </ZoomGroup>
            </Summary>
          </SplitRow>
          <SplitRow $h={17}>
            <FleetTitle>Used <b>9 vehicles</b></FleetTitle>
            <Axis>
              <Days>
                <Day>01 August (Fri)</Day>
                <Day>02 August (Fri)</Day>
                <Day>02 August (Fri)</Day>
              </Days>
              <Hours>
                {["19", "20", "21", "22", "23"].map((h) => <Hour key={h}>{h}<sup>00</sup></Hour>)}
              </Hours>
            </Axis>
          </SplitRow>
          <SplitRow $h={237}>
            <Fleet>
              {VEHICLES.map((v) => (
                <Vehicle key={v.plate}>
                  <VehicleName><ListIcon /><a href="#vehicle">{v.plate}</a><a href="#driver">({v.driver})</a></VehicleName>
                  <Swatch $color={v.color} />
                  <Figure $color="#2eb82e">{v.miles}</Figure>
                  <Figure $color="#1f86f0" $gap={4}>{v.load}</Figure>
                  <Mark>A</Mark>
                  <Figure $color="#8a1fd0"><Figure $color="#9a5a16">{v.cost}</Figure> {v.time}</Figure>
                  <Figure $color="#1f86f0" $gap={2}>{v.cap}</Figure>
                  {v.cap && <Parcel />}
                </Vehicle>
              ))}
            </Fleet>
            <LaneArea>
              <Lanes>
                {VEHICLES.map((v, i) => <Lane key={v.plate} $free={i === 1} />)}
              </Lanes>
              <VScroll><Up /><VThumb $h={104}><Grip /></VThumb><Down /></VScroll>
            </LaneArea>
          </SplitRow>
          <SplitRow $h={13}>
            <span />
            <HScroll>
              <svg width="4" height="6" viewBox="0 0 4 6"><path d="M4 0V6L0 3Z" fill="#333" /></svg>
              <svg width="4" height="6" viewBox="0 0 4 6"><path d="M0 0V6L4 3Z" fill="#333" /></svg>
            </HScroll>
          </SplitRow>
          <RowSplitter />
          <MapArea><Europe /></MapArea>
        </MainPane>
        <ColumnSplitter />
        <OrdersPane>
          <SearchRow>
            <SearchBox>
              <SearchInput aria-label="Search" placeholder="Search by reference" />
              <Arrow $classic><Down c="#111" /></Arrow>
            </SearchBox>
            <SelectBox $w={52} $h={12}>
              <NativeSelect $pad={2} aria-label="Search field"><option>Reference</option></NativeSelect>
              <Arrow $classic><Down c="#111" /></Arrow>
            </SelectBox>
          </SearchRow>
          <OrdersTitle>
            Unplanned <b>0 orders</b>
            <Tool label="Add order"><Plus /></Tool>
            <Tool label="Edit order"><Pencil /></Tool>
            <Tool label="Delete order"><Cross /></Tool>
            <Tool label="Filter"><Filter /></Tool>
            <Tool label="Pin"><Pin /></Tool>
          </OrdersTitle>
          <OrdersBody><OrdersScroll $faint><Up c="#888" /></OrdersScroll></OrdersBody>
        </OrdersPane>
      </Workspace>

      <Dialog role="dialog" aria-labelledby="info-title">
        <DialogTitle>
          <h2 id="info-title">Information</h2>
          <CloseButton type="button" aria-label="Close">
            <svg width="5" height="5" viewBox="0 0 5 5"><path d="M0 0L5 5M5 0L0 5" stroke="#3564b0" strokeWidth="1.3" /></svg>
          </CloseButton>
        </DialogTitle>
        <DialogBody>
          <Report>
            <h3>Planned successfully 94, not planned 0</h3>
            <OrdersTable>
              <colgroup><Col $w={67} /><Col $w={93} /><Col $w={65} /><Col /></colgroup>
              <thead><tr><th>Order reference</th><th>Vehicle</th><th>Delivery time</th><th>Drop location</th></tr></thead>
              <tbody>
                {ORDERS.map((o) => <tr key={o[0]}>{o.map((c) => <td key={c}>{c}</td>)}</tr>)}
              </tbody>
            </OrdersTable>
          </Report>
          <DialogScroll><Up /><VThumb $h={18}><Grip /></VThumb><Down /></DialogScroll>
        </DialogBody>
        <DialogFooter><OkButton type="button">OK</OkButton></DialogFooter>
      </Dialog>
    </Page>
  );
}
